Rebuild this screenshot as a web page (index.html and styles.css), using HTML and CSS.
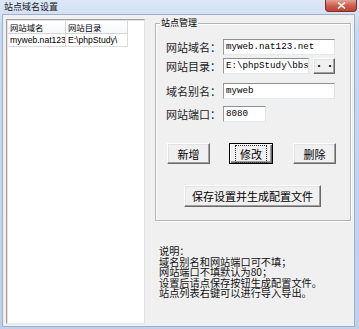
FILE: index.html
```html
<!DOCTYPE html>
<html lang="zh-CN">

<head>
    <meta charset="UTF-8" />
    <title>站点域名设置</title>
    <link rel="stylesheet" href="styles.css">
</head>

<body>
    <div class="window">
        <div class="titlebar">
            <span class="title">站点域名设置</span>
            <span class="close">
                <svg width="9" height="7" viewBox="0 0 9 7">
                    <path d="M1 0.5 L8 6.5 M8 0.5 L1 6.5" stroke="#fff" stroke-width="1.6" />
                </svg>
            </span>
        </div>

        <div class="client">
            <!-- site list -->
            <div class="listview">
                <div class="lv-row lv-head">
                    <div class="lv-cell col-domain">网站域名</div>
                    <div class="lv-cell col-dir">网站目录</div>
                </div>
                <div class="lv-row">
                    <div class="lv-cell col-domain">myweb.nat123</div>
                    <div class="lv-cell col-dir">E:\phpStudy\</div>
                </div>
            </div>

            <div class="side">
                <div class="group">
                    <span class="group-title">站点管理</span>

                    <div class="field row-1">
                        <label>网站域名：</label>
                        <div class="input w-full">myweb.nat123.net</div>
                    </div>
                    <div class="field row-2">
                        <label>网站目录：</label>
                        <div class="input w-dir">E:\phpStudy\bbs</div>
                        <button class="browse">··</button>
                    </div>
                    <div class="field row-3">
                        <label>域名别名：</label>
                        <div class="input w-full">myweb</div>
                    </div>
                    <div class="field row-4">
                        <label>网站端口：</label>
                        <div class="input w-port">8080</div>
                    </div>

                    <div class="btn-row">
                        <button class="btn btn-add">新增</button>
                        <button class="btn btn-edit default"><span class="focus">修改</span></button>
                        <button class="btn btn-del">删除</button>
                    </div>

                    <button class="btn btn-save">保存设置并生成配置文件</button>
                </div>

                <div class="notes">
                    <div>说明：</div>
                    <div>域名别名和网站端口可不填；</div>
                    <div>网站端口不填默认为80；</div>
                    <div>设置后请点保存按钮生成配置文件。</div>
                    <div>站点列表右键可以进行导入导出。</div>
                </div>
            </div>
        </div>
    </div>
</body>

</html>
```

FILE: styles.css
```css
* {
    box-sizing: border-box;
    margin: 0;
    padding: 0;
}

body {
    font-family: "Noto Sans CJK SC", sans-serif;
    color: #000;
    background: #fff;
}

.window {
    width: 359px;
    height: 329px;
    display: flex;
    flex-direction: column;
    padding: 0 4px 2px 2px;
    background: linear-gradient(#dce8f6, #c6d9f0 30px, #bcd2ec);
}

/* Title bar */
.titlebar {
    height: 14px;
    display: flex;
    justify-content: space-between;
    align-items: flex-start;
}

.title {
    font-size: 9px;
    line-height: 13px;
    padding-left: 2px;
    color: #1a1a1a;
}

.close {
    width: 32px;
    height: 12px;
    margin-right: -2px;
    display: flex;
    align-items: center;
    justify-content: center;
    border: 1px solid #7d2f26;
    border-top: none;
    border-radius: 0 0 4px 4px;
    background: linear-gradient(#e3a092, #cf5a48 55%, #c24331);
}

/* Client area */
.client {
    flex: 1;
    display: flex;
    gap: 10px;
    padding: 4px 3px 2px 3px;
    background: #f0f0f0;
    border: 1px solid #9eb1c8;
}

.listview {
    width: 139px;
    background: #fff;
    border: 1px solid #a0a0a0;
    border-right-color: #e3e3e3;
    border-bottom-color: #e3e3e3;
    box-shadow: inset 1px 1px 0 #e3e3e3;
    padding: 1px 0 0 1px;
}

.lv-row {
    display: flex;
    height: 13px;
}

.lv-cell {
    height: 13px;
    padding-left: 2px;
    border-right: 1px solid #dcdcdc;
    border-bottom: 1px solid #dcdcdc;
    white-space: nowrap;
    overflow: hidden;
    font-family: "Liberation Sans", "Noto Sans CJK SC", sans-serif;
    font-size: 8.6px;
    line-height: 12px;
}

.lv-head .lv-cell {
    font-family: "Noto Sans CJK SC", sans-serif;
    font-size: 8.4px;
    border-color: #d5d5d5;
    background: linear-gradient(#fff, #f7f8fa);
}

.col-domain {
    width: 58px;
}

.col-dir {
    width: 62px;
}

/* Right side */
.side {
    width: 196px;
    display: flex;
    flex-direction: column;
}

.group {
    position: relative;
    height: 198px;
    margin-top: 4px;
    padding: 15px 0 0 10px;
    border: 1px solid #b4b4b4;
    box-shadow: inset 1px 1px 0 #fff, 1px 1px 0 #fff;
}

.group-title {
    position: absolute;
    top: -6px;
    left: 4px;
    padding: 0 1px;
    background: #f0f0f0;
    font-size: 9px;
    line-height: 10px;
}

.field {
    display: flex;
    align-items: center;
    height: 16px;
}

.row-2 { margin-top: 3px; }
.row-3 { margin-top: 9px; }
.row-4 { margin-top: 7px; }

.field label {
    width: 57px;
    font-size: 11px;
    line-height: 14px;
    color: #1c1c1c;
}

.input {
    height: 16px;
    padding-left: 2px;
    background: #fff;
    border: 1px solid #abadb3;
    border-top-color: #8e8f8f;
    border-left-color: #9a9a9a;
    border-right-color: #e2e3ea;
    border-bottom-color: #e3e9ef;
    font-family: "Liberation Mono", monospace;
    font-size: 9.2px;
    line-height: 14px;
    white-space: nowrap;
    overflow: hidden;
}

.w-full { width: 112px; }
.w-dir { width: 86px; }
.w-port { width: 43px; }

/* Buttons */
button {
    font-family: "Noto Sans CJK SC", sans-serif;
    color: #000;
    background: #f0f0f0;
    border: 1px solid;
    border-color: #fff #696969 #696969 #fff;
    box-shadow: inset -1px -1px 0 #a0a0a0, inset 1px 1px 0 #e3e3e3;
}

.browse {
    width: 22px;
    height: 16px;
    margin-left: 4px;
    font-size: 10px;
    line-height: 12px;
    letter-spacing: 1px;
}

.btn {
    height: 21px;
    font-size: 11px;
    line-height: 14px;
    display: flex;
    align-items: center;
    justify-content: center;
}

.btn-row {
    display: flex;
    margin-top: 21px;
    margin-left: 1px;
}

.btn-add { width: 43px; }
.btn-edit { width: 44px; margin-left: 19px; }
.btn-del { width: 43px; margin-left: 20px; }

.default {
    border: 1px solid #000;
    box-shadow: inset 1px 1px 0 #fff, inset -1px -1px 0 #696969, inset -2px -2px 0 #a0a0a0;
}

.focus {
    padding: 0 3px;
    outline: 1px dotted #333;
    outline-offset: 1px;
}

.btn-save {
    width: 137px;
    height: 22px;
    margin-top: 21px;
    margin-left: 18px;
}

/* Notes */
.notes {
    margin-top: 25px;
    margin-left: 4px;
    font-size: 10.2px;
    line-height: 10.6px;
    color: #111;
}
```
